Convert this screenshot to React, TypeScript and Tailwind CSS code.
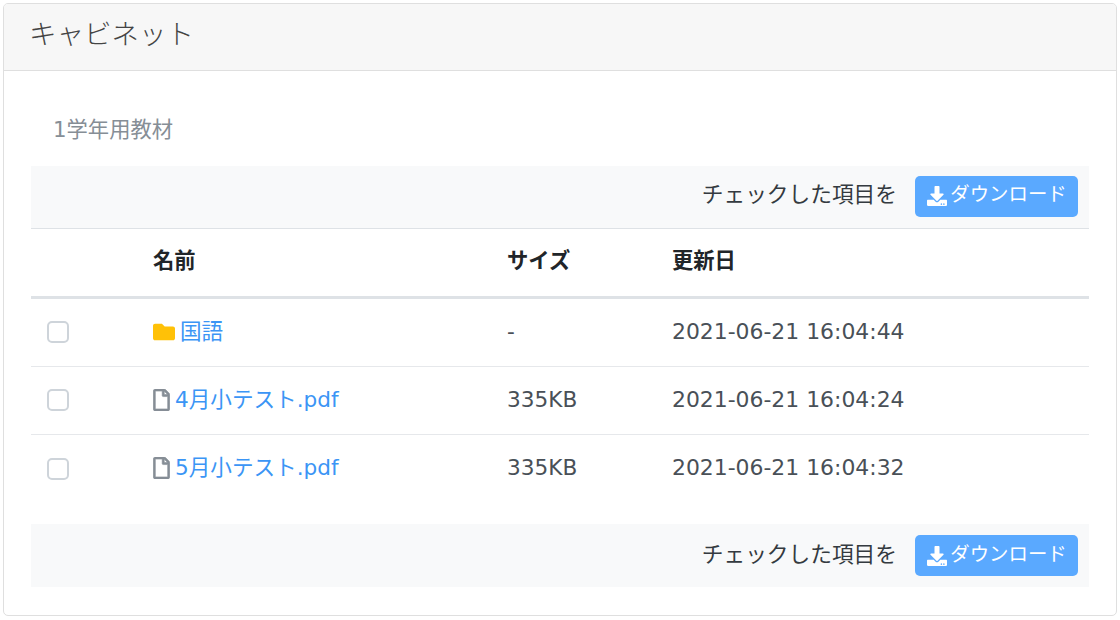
import { FaDownload, FaFolder, FaRegFile } from 'react-icons/fa';

const files = [
  { name: '国語', size: '-', date: '2021-06-21 16:04:44', folder: true },
  { name: '4月小テスト.pdf', size: '335KB', date: '2021-06-21 16:04:24', folder: false },
  { name: '5月小テスト.pdf', size: '335KB', date: '2021-06-21 16:04:32', folder: false },
];

function Toolbar({ tall }: { tall?: boolean }) {
  return (
    <div className={`${tall ? 'h-[63px]' : 'h-[62px]'} bg-[#f8f9fa] flex items-center justify-end pr-[11px]`}>
      <span className={`text-[21.7px] leading-none text-[#343a40] mr-[18px] ${tall ? '-translate-y-[1px]' : '-translate-y-[2px]'}`}>チェックした項目を</span>
      <button className={`w-[163px] h-[41px] rounded-[5px] bg-[#5aa9ff] text-white text-[19.4px] flex items-center justify-center gap-[4px] ${tall ? '' : '-translate-y-[1px]'}`}>
        <FaDownload size={20} className="translate-x-[1px]" />
        <span className="-translate-y-[1px]">ダウンロード</span>
      </button>
    </div>
  );
}

export default function App() {
  return (
    <div className="w-[1120px] h-[620px] bg-white p-[3px] font-['DejaVu_Sans','Noto_Sans_CJK_JP',sans-serif] text-[#495057]">
      <div className="h-[613px] border border-[#dfdfdf] rounded-[5px] overflow-hidden flex flex-col">
        <div className="h-[67px] bg-[#f7f7f7] border-b border-[#dfdfdf] flex items-center pl-[25px] pb-[4px] text-[27.5px] font-light text-[#444]">
          キャビネット
        </div>
        <div className="px-[27px] pt-[44px]">
          <div className="pl-[22px] text-[21.3px] leading-[30px] text-[#868e96] mb-[21px]">1学年用教材</div>
          <Toolbar />
          <div className="h-[71px] border-t border-[#dee2e6] border-b-[3px] border-b-[#dee2e6] flex items-center pb-[3px] font-bold text-[21.3px] text-[#212529]">
            <div className="w-[122px]" />
            <div className="w-[354px]">名前</div>
            <div className="w-[165px]">サイズ</div>
            <div>更新日</div>
          </div>
          {files.map((f, i) => (
            <div
              key={f.name}
              className={`h-[68px] flex items-center text-[21.6px] pb-[1px] ${i < 2 ? 'border-b border-[#e6e8eb]' : ''}`}
            >
              <div className="w-[122px] pl-[16px]">
                <div className="w-[22px] h-[22px] rounded-[5px] border-2 border-[#ced4da] bg-white" />
              </div>
              <div className="w-[354px] flex items-center text-[#3b95f5]">
                {f.folder ? (
                  <FaFolder size={22} className="text-[#ffc107] mr-[5px]" />
                ) : (
                  <FaRegFile className="w-[17px] h-[22px] text-[#868e96] mr-[5px] stroke-[14px] stroke-[#868e96]" />
                )}
                <span>{f.name}</span>
              </div>
              <div className="w-[165px]">{f.size}</div>
              <div className="text-[21.9px]">{f.date}</div>
            </div>
          ))}
          <div className="mt-[21px]">
            <Toolbar tall />
          </div>
        </div>
      </div>
    </div>
  );
}
